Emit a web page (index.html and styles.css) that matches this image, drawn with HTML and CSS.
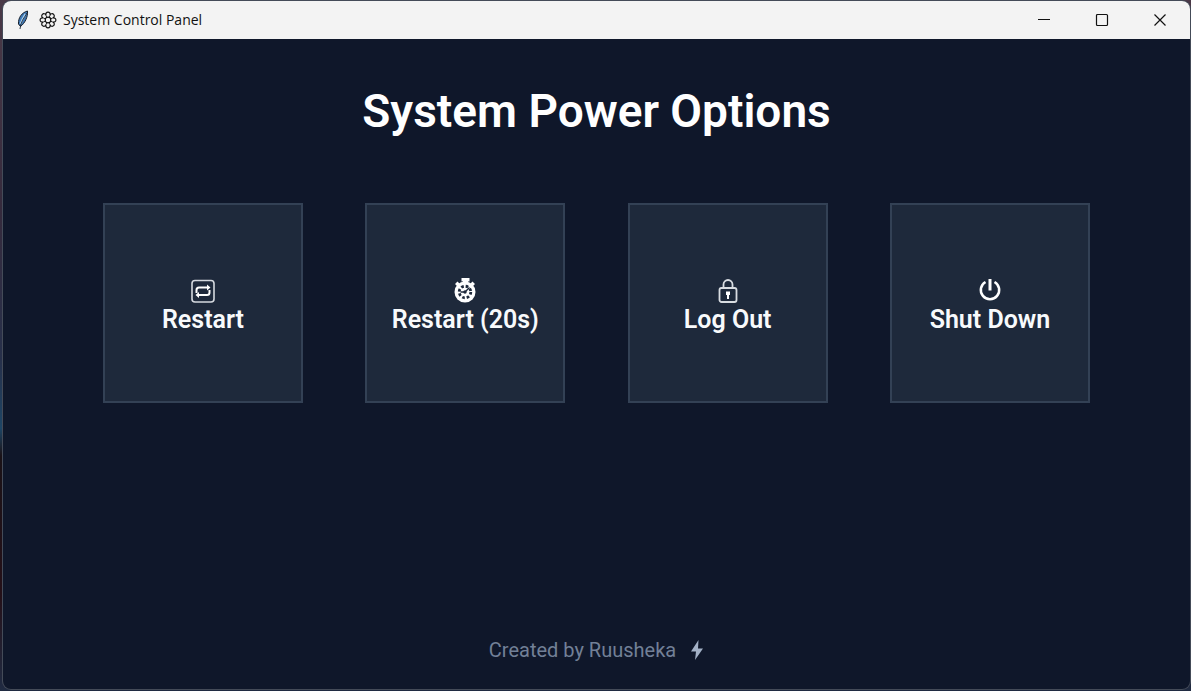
FILE: index.html
```html
<!DOCTYPE html>
<html lang="en">
<head>
<meta charset="utf-8">
<title>System Control Panel</title>
<link rel="stylesheet" href="styles.css">
</head>
<body>
<div class="window">
  <header class="titlebar">
    <svg class="feather" viewBox="0 0 16 20" aria-hidden="true">
      <path d="M12.500 1C7 2.500 3 7.500 3.500 14L5.500 16.500C10 13 13 7 12.500 1Z" fill="#3f78b5" stroke="#17202c" stroke-width="1"/>
      <path d="M10.500 4C8 8 6.500 11 5.500 14" fill="none" stroke="#a9d3f5" stroke-width="2"/>
      <path d="M12 3C9 8 5.500 12 5 19" fill="none" stroke="#1b2430" stroke-width="0.900"/>
    </svg>
    <svg class="gear" viewBox="0 0 18 18" fill="none" stroke="#111" stroke-width="1.200" aria-hidden="true">
      <circle cx="9" cy="9" r="2.800"/>
      <path d="M7 4.200A2.200 2.200 0 1 1 11 4.200A2.200 2.200 0 1 1 13.800 7A2.200 2.200 0 1 1 13.800 11A2.200 2.200 0 1 1 11 13.800A2.200 2.200 0 1 1 7 13.800A2.200 2.200 0 1 1 4.200 11A2.200 2.200 0 1 1 4.200 7A2.200 2.200 0 1 1 7 4.200Z"/>
      <path d="M7 4.200L7.800 6.500M11 4.200L10.200 6.500M13.800 7L11.500 7.800M13.800 11L11.500 10.200M11 13.800L10.200 11.500M7 13.800L7.800 11.500M4.200 11L6.500 10.200M4.200 7L6.500 7.800" stroke-width="0.900"/>
    </svg>
    <span class="caption">System Control Panel</span>
    <div class="controls">
      <button class="control" type="button" aria-label="Minimize"><svg viewBox="0 0 14 14"><path d="M1 6.500H13"/></svg></button>
      <button class="control" type="button" aria-label="Maximize"><svg viewBox="0 0 14 14"><rect x="1.500" y="1.500" width="11" height="11" rx="1"/></svg></button>
      <button class="control" type="button" aria-label="Close"><svg viewBox="0 0 14 14"><path d="M1.500 1.500L12.500 12.500M12.500 1.500L1.500 12.500"/></svg></button>
    </div>
  </header>
  <main class="content">
    <h1 class="heading">System Power Options</h1>
    <div class="options">
      <button class="option" type="button">
        <svg class="icon" viewBox="0 0 26 26" fill="none" stroke="#fff" aria-hidden="true">
          <rect x="2" y="2.500" width="22" height="21.500" rx="3" stroke="#d5d9df" stroke-width="1.600"/>
          <path d="M6.500 15V12Q6.500 9.500 9 9.500H18M19.500 12V14.500Q19.500 17 17 17H8" stroke-width="2"/>
          <path d="M17 6.500L20.500 9.500L17 12.500ZM9 14L5.500 17L9 20Z" fill="#fff" stroke="none"/>
        </svg>
        <span>Restart</span>
      </button>
      <button class="option" type="button">
        <svg class="icon" viewBox="0 0 26 26" aria-hidden="true">
          <path d="M9.500 0H17.500V3.500H16V6H11V3.500H9.500ZM3 6L5.500 3.500L8 6L5.500 8.500ZM23 6L20.500 3.500L18 6L20.500 8.500Z" fill="#fff"/>
          <circle cx="13" cy="14" r="10.500" fill="#fff"/>
          <circle cx="13" cy="14" r="5.800" fill="none" stroke="#1e293b" stroke-width="2.800" stroke-dasharray="2.600 1.955"/>
          <path d="M13 14L17.500 9.500M13 14H8.500" stroke="#1e293b" stroke-width="1.400"/>
          <circle cx="13" cy="14" r="1.700" fill="#1e293b"/>
        </svg>
        <span>Restart (20s)</span>
      </button>
      <button class="option" type="button">
        <svg class="icon" viewBox="0 0 26 26" fill="none" stroke="#d9dde2" stroke-width="1.800" aria-hidden="true">
          <rect x="4.500" y="10" width="17" height="14" rx="2"/>
          <path d="M8.500 10V6.500A4.500 4.500 0 0 1 17.500 6.500V10"/>
          <path d="M11 13.500H15V17H14V21H12V17H11Z" fill="#fff" stroke="none"/>
        </svg>
        <span>Log Out</span>
      </button>
      <button class="option" type="button">
        <svg class="icon" viewBox="0 0 26 26" fill="none" stroke="#fff" aria-hidden="true">
          <path d="M8.500 4A9.200 9.200 0 1 0 17.500 4" stroke-width="2.500"/>
          <path d="M13 1V12.500" stroke-width="3"/>
        </svg>
        <span>Shut Down</span>
      </button>
    </div>
    <footer class="credit">
      <span>Created by Ruusheka</span>
      <svg class="bolt" viewBox="0 0 14 20" aria-hidden="true"><path d="M8.500 0L1 11.500H6L5 20L13 8.500H8Z" fill="#a3b1c6"/></svg>
    </footer>
  </main>
</div>
</body>
</html>
```
FILE: styles.css
```css
* {
  box-sizing: border-box;
}

body {
  margin: 0;
  height: 100vh;
  padding: 1px 1px 2px 3px;
  background: linear-gradient(#4a3947, #352a3c 30%, #27304a 52%, #1d4565 62%, #1a1217 66%, #241018 86%, #202b42);
  font-family: Roboto, "Liberation Sans", sans-serif;
}

.window {
  height: 100%;
  display: flex;
  flex-direction: column;
  overflow: hidden;
  border-radius: 8px;
  background: #0f172a;
  box-shadow: 0 0 0 1px #444b58;
}

.titlebar {
  flex: none;
  height: 38px;
  display: flex;
  align-items: center;
  padding: 0 1px 0 12px;
  background: #f3f3f3;
  color: #111;
}

.feather {
  width: 16px;
  height: 20px;
}

.gear {
  width: 18px;
  height: 18px;
  margin: 0 6px 0 8px;
}

.caption {
  font: 14px/20px "Open Sans", sans-serif;
}

.controls {
  display: flex;
  height: 100%;
  margin-left: auto;
}

.control {
  width: 58px;
  display: grid;
  place-items: center;
  padding: 0;
  border: 0;
  background: transparent;
}

.control svg {
  width: 14px;
  height: 14px;
  fill: none;
  stroke: #111;
  stroke-width: 1.2;
}

.content {
  flex: 1;
  display: flex;
  flex-direction: column;
  padding: 40px 100px 25px;
}

.heading {
  margin: 0 0 60px;
  text-align: center;
  color: #fff;
  font-size: 46px;
  line-height: 64px;
  font-weight: 600;
}

.options {
  display: flex;
  justify-content: space-between;
}

.option {
  width: 200px;
  height: 200px;
  display: flex;
  flex-direction: column;
  align-items: center;
  justify-content: center;
  gap: 1px;
  padding: 6px 0 0;
  border: 2px solid #334155;
  background: #1e293b;
  color: #f8fafc;
  font: 600 25px/30px Roboto, "Liberation Sans", sans-serif;
}

.icon {
  width: 26px;
  height: 26px;
}

.credit {
  display: flex;
  align-items: center;
  justify-content: center;
  gap: 14px;
  margin-top: auto;
  color: #728097;
  font-size: 20px;
  line-height: 28px;
}

.bolt {
  width: 14px;
  height: 20px;
}
```
